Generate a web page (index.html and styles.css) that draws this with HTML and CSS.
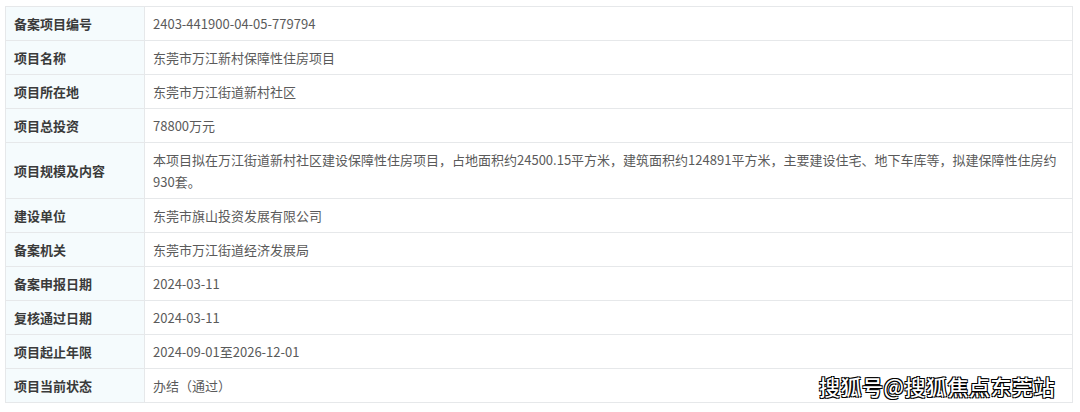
FILE: index.html
```html
<!DOCTYPE html>
<html lang="zh-CN">
<head>
    <meta charset="UTF-8">
    <meta name="viewport" content="width=device-width, initial-scale=1.0">
    <title>项目备案信息</title>
    <link rel="stylesheet" href="styles.css">
</head>
<body>
    <div class="wrap">
        <table class="info">
            <tbody>
                <tr>
                    <th>备案项目编号</th>
                    <td>2403-441900-04-05-779794</td>
                </tr>
                <tr>
                    <th>项目名称</th>
                    <td>东莞市万江新村保障性住房项目</td>
                </tr>
                <tr>
                    <th>项目所在地</th>
                    <td>东莞市万江街道新村社区</td>
                </tr>
                <tr>
                    <th>项目总投资</th>
                    <td>78800万元</td>
                </tr>
                <tr>
                    <th>项目规模及内容</th>
                    <td>本项目拟在万江街道新村社区建设保障性住房项目，占地面积约24500.15平方米，建筑面积约124891平方米，主要建设住宅、地下车库等，拟建保障性住房约930套。</td>
                </tr>
                <tr>
                    <th>建设单位</th>
                    <td>东莞市旗山投资发展有限公司</td>
                </tr>
                <tr>
                    <th>备案机关</th>
                    <td>东莞市万江街道经济发展局</td>
                </tr>
                <tr>
                    <th>备案申报日期</th>
                    <td>2024-03-11</td>
                </tr>
                <tr>
                    <th>复核通过日期</th>
                    <td>2024-03-11</td>
                </tr>
                <tr>
                    <th>项目起止年限</th>
                    <td>2024-09-01至2026-12-01</td>
                </tr>
                <tr>
                    <th>项目当前状态</th>
                    <td>办结（通过）</td>
                </tr>
            </tbody>
        </table>
        <div class="watermark">搜狐号@搜狐焦点东莞站</div>
    </div>
</body>
</html>
```

FILE: styles.css
```css
body {
    margin: 0;
    padding: 0;
    background: #fff;
    font-family: "Noto Sans CJK SC", "Noto Sans", sans-serif;
}
.wrap {
    position: relative;
    padding: 6px 7px 0 5px;
}
.info {
    width: 100%;
    border-collapse: collapse;
    font-size: 13px;
}
.info th, .info td {
    border: 1px solid #e6e8ea;
    padding: 6px 8px 5px;
    line-height: 22px;
    text-align: left;
    vertical-align: middle;
}
.info th {
    width: 122px;
    background-color: #f5fbfd;
    color: #3a3a3a;
    font-weight: bold;
}
.info td {
    color: #5a5a5a;
    font-weight: normal;
}
.watermark {
    position: absolute;
    right: 25px;
    top: 371px;
    font-size: 21px;
    font-weight: 500;
    color: #fff;
    letter-spacing: 0.5px;
    text-shadow: -1px -1px 0 #000, 1px -1px 0 #000, -1px 1px 0 #000, 1px 1px 0 #000;
}
```
